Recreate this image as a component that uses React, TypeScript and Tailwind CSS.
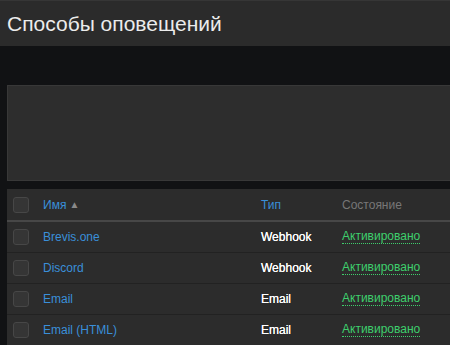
const rows = [
  { name: 'Brevis.one', type: 'Webhook' },
  { name: 'Discord', type: 'Webhook' },
  { name: 'Email', type: 'Email' },
  { name: 'Email (HTML)', type: 'Email' },
];

const Check = () => (
  <div className="w-4 h-4 rounded-[3px] border border-[#474747] bg-[#353535]" />
);

export default function App() {
  return (
    <div className="h-[345px] w-[450px] overflow-hidden bg-[#111214] font-['Liberation_Sans',Arial,sans-serif]">
      {/* Cabecera */}
      <div className="h-[46px] bg-[#2b2b2b] border-t border-[#363636] flex items-center px-[7px]">
        <h1 className="text-[21px] text-[#ececec] leading-none">Способы оповещений</h1>
      </div>

      <div className="w-[470px] pl-[7px] pt-[39px]">
        {/* Panel vacío */}
        <div className="h-[96px] bg-[#2d2d2d] border border-[#383838]" />

        {/* Tabla */}
        <div className="mt-[8px] bg-[#2c2c2c]">
          <div className="h-[33px] flex items-center border-b-2 border-[#474747] text-[12px]">
            <div className="w-[36px] pl-[6px]"><Check /></div>
            <div className="w-[218px] text-[#3a8fd9] flex items-center gap-[3px]">
              Имя
              <span className="text-[#8a8a8a] text-[10px] leading-none">▲</span>
            </div>
            <div className="w-[81px] text-[#3a8fd9]">Тип</div>
            <div className="text-[#777777]">Состояние</div>
          </div>
          {rows.map((r) => (
            <div key={r.name} className="h-[31px] flex items-center border-b border-[#222222] text-[12px]">
              <div className="w-[36px] pl-[6px]"><Check /></div>
              <div className="w-[218px] text-[#3a8fd9]">{r.name}</div>
              <div className="w-[81px] text-white [text-shadow:0_0_0.4px_#fff]">{r.type}</div>
              <div className="text-[#3ecf6c] border-b border-dotted border-[#3ecf6c] leading-[13px]">Активировано</div>
            </div>
          ))}
        </div>
      </div>
    </div>
  );
}
